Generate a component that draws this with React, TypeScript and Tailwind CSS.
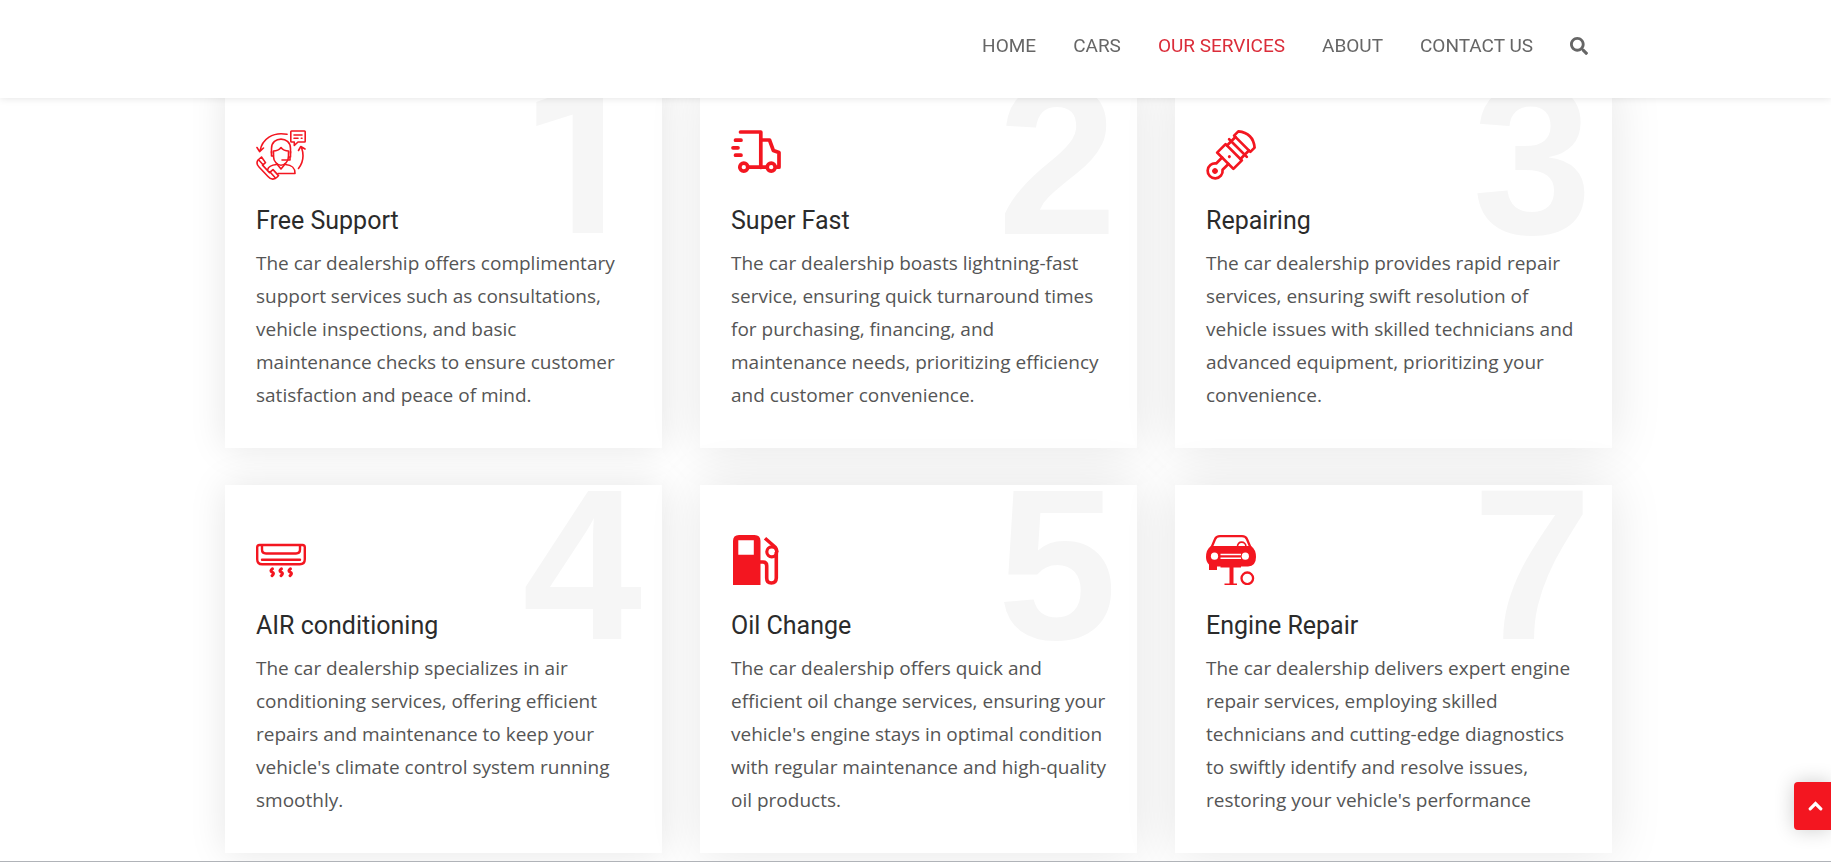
import React from "react";
import { FaSearch } from "react-icons/fa";

const SupportIcon = () => (
  <svg viewBox="0 0 50 50" className="h-[50px] w-[50px]" fill="none" stroke="currentColor" strokeWidth="1.6" strokeLinejoin="round" strokeLinecap="round" aria-hidden="true">
    <path d="M35.500 1h13q.7 0 .7.7v9.600q0 .7-.7.7h-6.500l-3.700 3.500V12h-2.800q-.7 0-.7-.7V1.700q0-.7.7-.7z" />
    <path d="M38 5h8M38 8.200h4M45.300 8.200h.7" />
    <path d="M31 4.300C17 1.500 6 9 4 21M1 17.500l2.600 4.200L7.500 18" />
    <path d="M42.500 38.500c4.500-6 5.500-14 3-21M42.500 20.500l2.300-4 4.200 2.500" />
    <path d="M15.500 23v-4.500C15.500 6 34.500 6 34.500 18.500V23" />
    <path d="M17.500 26.500c0 5 4 8.800 7.500 8.800s7.500-3.800 7.500-8.800v-5.500C30 21 27 20 25 17.500 23 20 20 21 17.500 21z" />
    <path d="M15.500 21.500v4.500h2M34.500 21.500v5.500h-2M34 27v3h-8" />
    <path d="M20.500 33.500l4.500 5.500 4.500-5.500M20.500 34.500c-4 .5-8 1.500-8.800 5M29.500 34.500c6 .5 9.500 2.500 9.500 9H22" />
    <path d="M5.500 27l-3.500 3c-2 3-1 5 1 7l9 9.500c3 3.500 6.500 3.500 9.500.3l1-1.200-5.500-6-3.500 3-7-7.500 3-2.500z" />
    <path d="M2.800 30l4.500 5M14.500 42.500l4.500 5" />
  </svg>
);

const TruckIcon = () => (
  <svg viewBox="0 0 50 50" className="h-[50px] w-[50px]" fill="none" stroke="currentColor" strokeWidth="3.700" strokeLinecap="round" strokeLinejoin="round" aria-hidden="true">
    <path d="M9.500 2H29.800v35.500" />
    <path d="M29.800 10h8.700l3.800 10.400 5.700 2V37.200h-2" />
    <path d="M17 37.200h18.500" />
    <path d="M4.500 10.200h5.500M2 17.800h5M4.500 25.200h5.500" />
    <circle cx="12.800" cy="37.200" r="4" />
    <circle cx="40.200" cy="37.200" r="4" />
  </svg>
);

const PistonIcon = () => (
  <svg viewBox="0 0 50 50" className="h-[50px] w-[50px] overflow-visible" fill="none" stroke="currentColor" strokeWidth="2.700" strokeLinejoin="round" strokeLinecap="round" aria-hidden="true">
    <g transform="translate(9 41) rotate(-45)">
      <path d="M14.500 4.500H6.200A7.500 7.500 0 1 1 6.200 -4.500H14.500" />
      <path d="M14.500-11.500V11.500H26.500V-11.500z" />
      <path d="M26.500-9.500H38.500M26.500 9.500H38.500M32.500-12.500V12.500" />
      <path d="M38.500-11.500H44.500Q54 0 44.500 11.500H38.500z" />
      <circle cx="0" cy="0" r="1.500" fill="currentColor" />
      <circle cx="20.300" cy="0" r="1.500" fill="currentColor" stroke="none" />
    </g>
  </svg>
);

const AirIcon = () => (
  <svg viewBox="0 0 50 50" className="h-[50px] w-[50px]" fill="none" stroke="currentColor" strokeWidth="2.400" strokeLinecap="round" strokeLinejoin="round" aria-hidden="true">
    <path d="M3.500 10h43q2.300 0 2.300 2.300v12q0 5-5 5H6.200q-5 0-5-5v-12q0-2.300 2.300-2.300z" />
    <path d="M6 10.500v4q0 4 4 4h30q4 0 4-4v-4M6 24.700h38" />
    <path d="M16.500 33.800q-3 2-.3 3.400t-.2 3.500M25.500 33.800q-3 2-.3 3.400t-.2 3.500M34.500 33.800q-3 2-.3 3.400t-.2 3.500" strokeWidth="3" />
  </svg>
);

const FuelIcon = () => (
  <svg viewBox="0 0 50 50" className="h-[50px] w-[50px]" fill="none" stroke="currentColor" aria-hidden="true">
    <path d="M2 50V6q0-6 6-6h15.500q6 0 6 6v44zM7.300 5.300v14.500h15.500V5.300z" fill="currentColor" fillRule="evenodd" stroke="none" />
    <path d="M29 27h3q3.700 0 3.700 3.700V43q0 5 4.700 5t4.900-5V17" strokeWidth="3.600" />
    <path d="M34 3.200L43.500 11.500q2.300 2 2.300 5.500" strokeWidth="3.500" />
    <circle cx="40.800" cy="16.800" r="5" strokeWidth="3.200" />
  </svg>
);

const LiftIcon = () => (
  <svg viewBox="0 0 50 50" className="h-[50px] w-[50px]" fill="none" stroke="currentColor" aria-hidden="true">
    <path d="M5.500 12.500L9 4.200Q10.300 1.200 14 1.200h22q3.700 0 5 3l3.500 8.300" strokeWidth="2.300" />
    <path d="M31.500 12c-.5-6.500 8.500-6.500 8.500 0" strokeWidth="1.600" />
    <path d="M5 11h40q5 3.500 5 11 0 9-8 9.500H35V32.500H27.500V48.500H31V50H18.500V48.500H23.500V32.500H14.500V31.500H11V35H3V29.500Q0 27 0 22q0-7.500 5-11z" fill="currentColor" stroke="none" />
    <circle cx="8.500" cy="21.200" r="3.600" fill="white" stroke="none" />
    <circle cx="39.300" cy="21.200" r="3.600" fill="white" stroke="none" />
    <path d="M14.500 19.500h20.500M14.500 23.200h20.500" stroke="white" strokeWidth="1.600" />
    <circle cx="41.300" cy="43.300" r="5.800" strokeWidth="2.300" />
  </svg>
);

const arial = "font-['Liberation_Sans',Arial,sans-serif]";
const roboto = "font-['Roboto',sans-serif]";
const softShadow = "shadow-[0_0_35px_rgba(0,0,0,0.1)]";
const wideShadow = "shadow-[0_0_50px_rgba(0,0,0,0.1)]";

const services = [
  { number: "1", face: roboto, shadow: softShadow, title: "Free Support", Icon: SupportIcon, text: "The car dealership offers complimentary support services such as consultations, vehicle inspections, and basic maintenance checks to ensure customer satisfaction and peace of mind." },
  { number: "2", face: arial, shadow: wideShadow, title: "Super Fast", Icon: TruckIcon, text: "The car dealership boasts lightning-fast service, ensuring quick turnaround times for purchasing, financing, and maintenance needs, prioritizing efficiency and customer convenience." },
  { number: "3", face: arial, shadow: wideShadow, title: "Repairing", Icon: PistonIcon, text: "The car dealership provides rapid repair services, ensuring swift resolution of vehicle issues with skilled technicians and advanced equipment, prioritizing your convenience." },
  { number: "4", face: arial, shadow: softShadow, title: "AIR conditioning", Icon: AirIcon, text: "The car dealership specializes in air conditioning services, offering efficient repairs and maintenance to keep your vehicle's climate control system running smoothly." },
  { number: "5", face: arial, shadow: wideShadow, title: "Oil Change", Icon: FuelIcon, text: "The car dealership offers quick and efficient oil change services, ensuring your vehicle's engine stays in optimal condition with regular maintenance and high-quality oil products." },
  { number: "7", face: arial, shadow: wideShadow, title: "Engine Repair", Icon: LiftIcon, text: "The car dealership delivers expert engine repair services, employing skilled technicians and cutting-edge diagnostics to swiftly identify and resolve issues, restoring your vehicle's performance" },
];

const links = ["HOME", "CARS", "OUR SERVICES", "ABOUT", "CONTACT US"];

export default function App() {
  return (
    <div className="h-screen overflow-hidden border-b border-[#b0b3b8] bg-white">
      <header className="fixed inset-x-0 top-0 z-20 bg-white pl-1.5 shadow-[0_0_8px_rgba(0,0,0,0.12)]">
        <div className="mx-auto flex h-[98px] max-w-[1387px] items-start justify-end pt-[31px] pr-6">
          <nav className="flex items-center gap-[37px] font-['Roboto',sans-serif] text-[19px] leading-[30px] text-[#666666]">
            {links.map((label) => (
              <a key={label} href="#" className={label === "OUR SERVICES" ? "text-[#db2d3a]" : ""}>
                {label}
              </a>
            ))}
            <button type="button" aria-label="Search">
              <FaSearch className="h-[18px] w-[18px]" />
            </button>
          </nav>
        </div>
      </header>

      <main className="pt-20 pl-1.5">
        <div className="mx-auto grid max-w-[1387px] grid-cols-3 gap-x-[38px] gap-y-[37px]">
          {services.map(({ number, face, shadow, title, Icon, text }) => (
            <article key={number} className={`relative bg-white pt-[50px] pr-7 pb-9 pl-[31px] ${shadow}`}>
              <span aria-hidden="true" className={`absolute top-1 right-5 text-[215px] leading-[152px] font-bold text-[#f6f6f6] ${face}`}>
                {number}
              </span>
              <div className="relative">
                <div className="text-[#f31620]">
                  <Icon />
                </div>
                <h3 className="mt-6 font-['Roboto',sans-serif] text-[25px] leading-[34px] text-[#2b2b2b]">{title}</h3>
                <p className="mt-[9px] font-['Open_Sans',sans-serif] text-[19px] leading-[33px] text-[#555555]">{text}</p>
              </div>
            </article>
          ))}
        </div>
      </main>

      <button type="button" aria-label="Back to top" className="fixed right-0 bottom-8 z-30 flex h-12 w-[37px] items-center justify-end rounded-l bg-[#f31620] pr-2 text-white shadow-[0_0_20px_rgba(0,0,0,0.2)]">
        <svg viewBox="0 0 15 10" className="h-2.5 w-[15px]" fill="none" stroke="currentColor" strokeWidth="3.200" strokeLinecap="round" aria-hidden="true">
          <path d="M2.200 7.800L7.500 2.500l5.300 5.300" />
        </svg>
      </button>
    </div>
  );
}
